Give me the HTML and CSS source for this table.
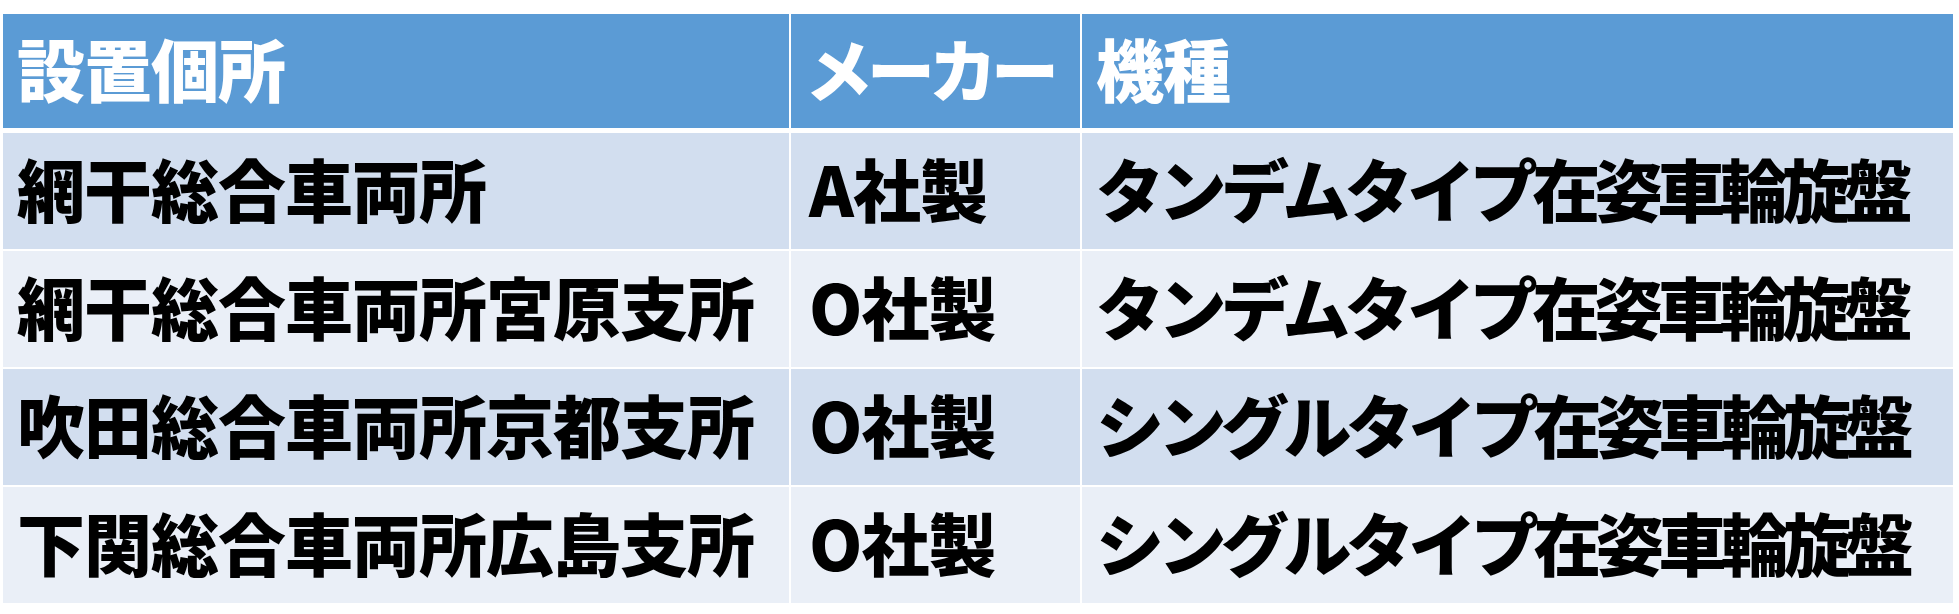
FILE: index.html
```html
<!DOCTYPE html>
<html lang="ja">
<head>
<meta charset="utf-8">
<link rel="stylesheet" href="styles.css">
</head>
<body>
<div class="table">
  <div class="row head">
    <div class="cell">設置個所</div>
    <div class="cell narrow">メーカー</div>
    <div class="cell">機種</div>
  </div>
  <div class="tbody">
    <div class="row odd">
      <div class="cell">網干総合車両所</div>
      <div class="cell maker">A社製</div>
      <div class="cell type">タンデムタイプ在姿車輪旋盤</div>
    </div>
    <div class="row even">
      <div class="cell">網干総合車両所宮原支所</div>
      <div class="cell maker">O社製</div>
      <div class="cell type">タンデムタイプ在姿車輪旋盤</div>
    </div>
    <div class="row odd">
      <div class="cell">吹田総合車両所京都支所</div>
      <div class="cell maker">O社製</div>
      <div class="cell type">シングルタイプ在姿車輪旋盤</div>
    </div>
    <div class="row even">
      <div class="cell">下関総合車両所広島支所</div>
      <div class="cell maker">O社製</div>
      <div class="cell type">シングルタイプ在姿車輪旋盤</div>
    </div>
  </div>
</div>
</body>
</html>
```

FILE: styles.css
```css
html, body {
  margin: 0;
  padding: 0;
  background: #ffffff;
}

body {
  padding: 14px 0 0 3px;
  font-family: "Noto Sans CJK JP", "Noto Sans", sans-serif;
}

.table {
  display: flex;
  flex-direction: column;
  gap: 5px;
  width: 1950px;
}

.tbody {
  display: flex;
  flex-direction: column;
  gap: 2px;
}

.row {
  display: grid;
  grid-template-columns: 786px 289px 871px;
  column-gap: 2px;
}

.head {
  height: 114px;
}

.tbody .row {
  height: 116px;
}

.cell {
  display: flex;
  align-items: center;
  padding: 0 0 6px 14px;
  font-size: 68px;
  font-weight: 900;
  line-height: 1;
  white-space: nowrap;
  letter-spacing: -1px;
  overflow: hidden;
}

.head .cell {
  background: #5b9bd5;
  color: #ffffff;
}

.odd .cell {
  background: #d2deef;
  color: #000000;
}

.even .cell {
  background: #eaeff7;
  color: #000000;
}

.maker {
  padding-left: 18px;
}

.narrow {
  letter-spacing: -6px;
}

.type {
  letter-spacing: -5.5px;
}
```
